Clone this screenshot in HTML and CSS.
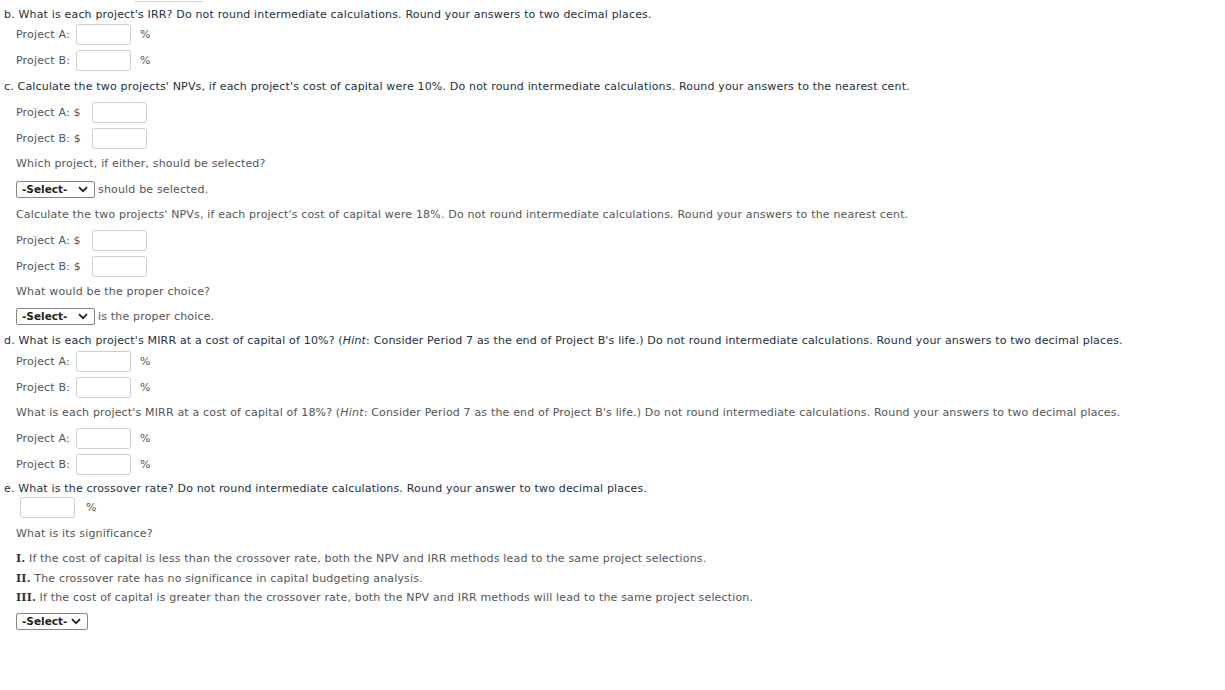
FILE: index.html
```html
<!DOCTYPE html>
<html lang="en">
<head>
    <meta charset="UTF-8">
    <meta name="viewport" content="width=device-width, initial-scale=1.0">
    <title>Capital Budgeting Questions</title>
    <link rel="stylesheet" href="styles.css">
</head>
<body>

    <!-- bottom edge of the answer box from the part above -->
    <div class="prev-box"></div>

    <!-- b -->
    <div class="row question first">b. What is each project's IRR? Do not round intermediate calculations. Round your answers to two decimal places.</div>
    <div class="row sub mt-0">Project A:<input class="answer" type="text"><span class="unit">%</span></div>
    <div class="row sub">Project B:<input class="answer" type="text"><span class="unit">%</span></div>

    <!-- c -->
    <div class="row question">c. Calculate the two projects' NPVs, if each project's cost of capital were 10%. Do not round intermediate calculations. Round your answers to the nearest cent.</div>
    <div class="row sub">Project A: $<input class="answer money" type="text"></div>
    <div class="row sub">Project B: $<input class="answer money" type="text"></div>
    <div class="row sub mt-5">Which project, if either, should be selected?</div>
    <div class="row sub">
        <span class="select wide">-Select-<svg width="10" height="7" viewBox="0 0 10 7"><path d="M1 1.2 L5 5.2 L9 1.2" fill="none" stroke="#222" stroke-width="1.8"/></svg></span>
        <span class="after">should be selected.</span>
    </div>
    <div class="row sub mt-5">Calculate the two projects' NPVs, if each project's cost of capital were 18%. Do not round intermediate calculations. Round your answers to the nearest cent.</div>
    <div class="row sub">Project A: $<input class="answer money" type="text"></div>
    <div class="row sub">Project B: $<input class="answer money" type="text"></div>
    <div class="row sub mt-5">What would be the proper choice?</div>
    <div class="row sub mt-5">
        <span class="select wide">-Select-<svg width="10" height="7" viewBox="0 0 10 7"><path d="M1 1.2 L5 5.2 L9 1.2" fill="none" stroke="#222" stroke-width="1.8"/></svg></span>
        <span class="after">is the proper choice.</span>
    </div>

    <!-- d -->
    <div class="row question mt-4">d. What is each project's MIRR at a cost of capital of 10%? (<i>Hint</i>: Consider Period 7 as the end of Project B's life.) Do not round intermediate calculations. Round your answers to two decimal places.</div>
    <div class="row sub mt-1">Project A:<input class="answer" type="text"><span class="unit">%</span></div>
    <div class="row sub">Project B:<input class="answer" type="text"><span class="unit">%</span></div>
    <div class="row sub mt-5">What is each project's MIRR at a cost of capital of 18%? (<i>Hint</i>: Consider Period 7 as the end of Project B's life.) Do not round intermediate calculations. Round your answers to two decimal places.</div>
    <div class="row sub">Project A:<input class="answer" type="text"><span class="unit">%</span></div>
    <div class="row sub">Project B:<input class="answer" type="text"><span class="unit">%</span></div>

    <!-- e -->
    <div class="row question mt-4">e. What is the crossover rate? Do not round intermediate calculations. Round your answer to two decimal places.</div>
    <div class="row rate mt-neg"><input class="answer" type="text"><span class="unit">%</span></div>
    <div class="row sub">What is its significance?</div>
    <div class="row sub mt-5"><b class="num">I.</b>&nbsp;If the cost of capital is less than the crossover rate, both the NPV and IRR methods lead to the same project selections.</div>
    <div class="row sub mt-0"><b class="num">II.</b>&nbsp;The crossover rate has no significance in capital budgeting analysis.</div>
    <div class="row sub mt-neg"><b class="num">III.</b>&nbsp;If the cost of capital is greater than the crossover rate, both the NPV and IRR methods will lead to the same project selection.</div>
    <div class="row sub mt-4">
        <span class="select">-Select-<svg width="10" height="7" viewBox="0 0 10 7"><path d="M1 1.2 L5 5.2 L9 1.2" fill="none" stroke="#222" stroke-width="1.8"/></svg></span>
    </div>

</body>
</html>
```

FILE: styles.css
```css
body {
    font-family: "DejaVu Sans", Verdana, sans-serif;
    font-size: 11px;
    letter-spacing: 0.17px;
    color: #555;
    margin: 0;
    padding: 0;
    background-color: #fff;
}

.prev-box {
    width: 68px;
    height: 1px;
    margin-left: 135px;
    border-bottom: 1px solid #d4d4d4;
}

/* Each line of the question */
.row {
    height: 20px;
    display: flex;
    align-items: center;
    margin-top: 6px;
    white-space: nowrap;
}

.row.first {
    margin-top: 2px;
}

.mt-0 { margin-top: 0; }
.mt-1 { margin-top: 1px; }
.mt-4 { margin-top: 4px; }
.mt-5 { margin-top: 5px; }
.mt-neg { margin-top: -1px; }

.question {
    padding-left: 4px;
    color: #22303e;
}

.sub {
    padding-left: 16px;
}

.rate {
    padding-left: 20px;
}

/* Answer inputs */
.answer {
    box-sizing: border-box;
    width: 55px;
    height: 21px;
    margin: 0 0 0 6px;
    padding: 0 3px;
    border: 1px solid #cfcfcf;
    border-radius: 3px;
    background-color: #fff;
    font-family: inherit;
    font-size: 11px;
}

.answer.money {
    margin-left: 11px;
}

.rate .answer {
    margin-left: 0;
}

.unit {
    margin-left: 9px;
}

.rate .unit {
    margin-left: 11px;
}

/* Dropdowns */
.select {
    box-sizing: border-box;
    display: inline-flex;
    align-items: center;
    justify-content: space-between;
    width: 72px;
    height: 17px;
    padding: 0 6px 0 5px;
    border: 1px solid #858585;
    border-radius: 2px;
    background-color: #fff;
    color: #222;
    font-weight: bold;
    font-size: 10.5px;
    letter-spacing: 0;
}

.select.wide {
    width: 79px;
}

.after {
    margin-left: 3px;
}

.num {
    font-family: "DejaVu Serif", "Liberation Serif", serif;
    color: #333;
}
```
